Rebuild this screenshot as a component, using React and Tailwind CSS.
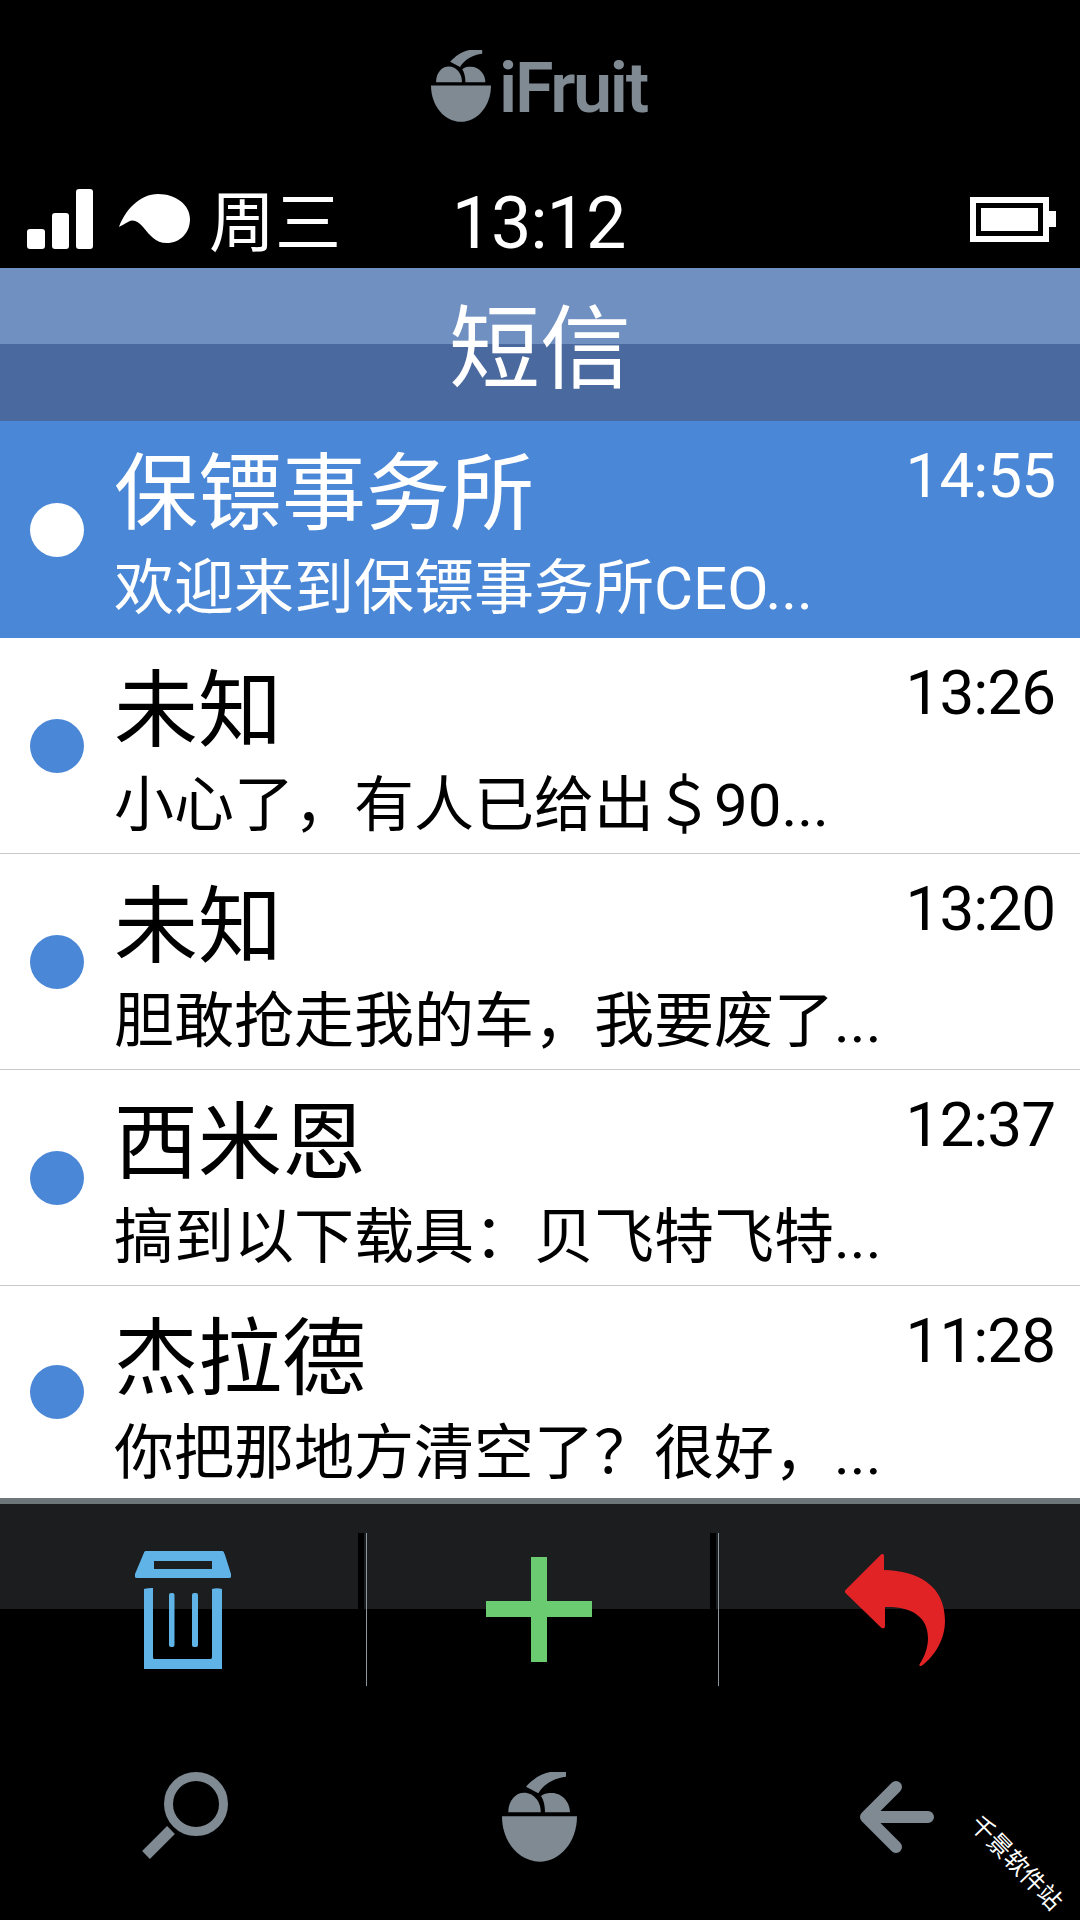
const rows = [
  { name: '保镖事务所', text: '欢迎来到保镖事务所CEO...', time: '14:55', active: true },
  { name: '未知', text: '小心了，有人已给出＄90...', time: '13:26' },
  { name: '未知', text: '胆敢抢走我的车，我要废了...', time: '13:20' },
  { name: '西米恩', text: '搞到以下载具：贝飞特飞特...', time: '12:37' },
  { name: '杰拉德', text: '你把那地方清空了？很好，...', time: '11:28' },
];

function FruitIcon({ className }) {
  return (
    <svg viewBox="0 0 75 90" className={className} fill="#7f8a93">
      <path d="M64 0 L48 0 C38 2 30 8 24 14.7 L36.3 21.3 C42 12 52 6 64 4.7Z" />
      <path d="M6.3 40.3 C6.3 28 14 20.7 22 20.7 C32 20.7 39 30 38.7 40.3Z" />
      <path d="M43 40.3 C43 32 41 27 39 24 C43 21 46 21 50 21 C60 21 68 30 68 40.3Z" />
      <path d="M0 44.3 H75 C75 70 58 89.7 37.5 89.7 C17 89.7 0 70 0 44.3Z" />
    </svg>
  );
}

function StatusBar() {
  return (
    <div className="h-[78px] pb-[20px] flex items-center text-white">
      <div className="flex-1 flex items-center pl-[27px]">
        <svg viewBox="0 0 66 60" className="w-[66px] h-[60px]" fill="#fff">
          <rect x="0" y="40" width="18" height="20" rx="3" />
          <rect x="25" y="24" width="17" height="36" rx="3" />
          <rect x="49" y="0" width="17" height="60" rx="3" />
        </svg>
        <svg viewBox="0 0 72 50" className="w-[72px] h-[50px] ml-[26px]" fill="#fff">
          <path d="M0 33 C6 16 21 0 39 0 C57 0 71 11 71 25 C71 39 61 49 48 49 C36 49 31 41 24 33 C19 27 14 25 9 28 C5 30 2 32 0 33Z" />
        </svg>
        <span className="ml-[18px] mt-[10px] text-[66px] leading-none">周三</span>
      </div>
      <span className="mt-[10px] mr-[6px] text-[72px] tracking-[-1.2px] leading-none">13:12</span>
      <div className="flex-1 flex items-center justify-end pr-[24px]">
        <div className="w-[79px] h-[45px] border-[6px] border-white p-[5px] mt-[1px]">
          <div className="w-full h-full bg-white" />
        </div>
        <div className="w-[7px] h-[16px] bg-white" />
      </div>
    </div>
  );
}

function MessageRow({ row, last }) {
  const dot = row.active ? 'bg-white' : 'bg-[#4a87d6]';
  const bg = row.active ? 'bg-[#4a87d6] text-white' : 'bg-white text-black';
  const border = row.active || last ? '' : 'border-b border-[#c8c8c8]';
  const height = row.active ? 'h-[217px]' : last ? 'h-[212px]' : 'h-[216px]';
  return (
    <div className={`flex items-center ${height} ${bg} ${border}`}>
      <div className={`w-[54px] h-[54px] rounded-full ml-[30px] ${dot}`} />
      <div className="ml-[30px] flex-1 self-start pt-[22px]">
        <div className="text-[84px] leading-[104px]">{row.name}</div>
        <div className="text-[60px] leading-[76px] mt-[4px]">{row.text}</div>
      </div>
      <div className="self-start pt-[20px] pr-[25px] text-[62px] tracking-[-1px] leading-[70px]">{row.time}</div>
    </div>
  );
}

function Toolbar() {
  return (
    <div className="h-[188px] pt-[29px] flex border-t-[6px] border-[#6d7779] bg-[linear-gradient(#1b1d1f_0,#1b1d1f_105px,#000_105px)]">
      <div className="w-[366px] h-[153px] flex items-center justify-center">
        <svg viewBox="135 1550 96 118" className="w-[96px] h-[118px]" fill="#5fb3e6">
          <path fillRule="evenodd" d="M146 1550 H222 C224 1550 224 1552 225 1554 L231 1573 C232 1576 231 1577 229 1577 H137 C135 1577 134 1576 135 1573 L143 1554 C144 1552 144 1550 146 1550Z M154 1560 V1568 H212 V1560Z" />
          <path d="M144 1588 C147 1587 150 1587 153 1587 V1656 C153 1658 154 1658 155 1658 H210 C212 1658 212 1657 212 1655 V1588 C215 1587 219 1587 222 1588 V1668 H144Z" />
          <rect x="169" y="1592" width="5.5" height="54" rx="2" />
          <rect x="192" y="1592" width="6" height="54" rx="2" />
        </svg>
      </div>
      <div className="relative w-px h-[153px] bg-[#8a96a0]">
        <div className="absolute right-[3px] top-0 w-[6px] h-[76px] bg-black" />
      </div>
      <div className="w-[351px] h-[153px] pr-[7px] flex items-center justify-center">
        <svg viewBox="0 0 106 105" className="w-[106px] h-[105px]" fill="#6bcb70">
          <rect x="45" y="0" width="16" height="105" />
          <rect x="0" y="44" width="106" height="16" />
        </svg>
      </div>
      <div className="relative w-px h-[153px] bg-[#8a96a0]">
        <div className="absolute right-[3px] top-0 w-[6px] h-[76px] bg-black" />
      </div>
      <div className="flex-1 h-[153px] pr-[9px] flex items-center justify-center">
        <svg viewBox="845 1552 101 114" className="w-[101px] h-[114px]" fill="#e12325">
          <path d="M845.5 1589 L881 1553.5 C882.5 1552.5 884 1553 884 1555 V1569 C918 1570 945 1584 945 1620 C945 1638 935 1655 922 1664.5 C920 1666 918.5 1664.5 920 1662.5 C925 1655 928 1646 928 1637 C928 1615 910 1605 885 1606 V1625 C885 1627.5 883 1628 881 1626.5 L845.5 1592 C844.5 1591 844.5 1590 845.5 1589Z" />
        </svg>
      </div>
    </div>
  );
}

function BottomNav() {
  return (
    <div className="relative h-[234px] pt-[86px] pl-[140px] flex items-start overflow-hidden">
      <svg viewBox="0 0 90 90" className="w-[90px] h-[90px]" fill="none" stroke="#7f8a93">
        <circle cx="56" cy="32" r="27.5" strokeWidth="9" />
        <path d="M31 58 L6 83" strokeWidth="11" />
      </svg>
      <FruitIcon className="w-[75px] h-[90px] ml-[272px]" />
      <svg viewBox="0 0 74 72" className="w-[74px] h-[72px] ml-[283px] mt-[9px]" fill="none" stroke="#7f8a93" strokeWidth="12" strokeLinecap="round" strokeLinejoin="round">
        <path d="M36 6 L6 36 L36 66 M6 36 H68" />
      </svg>
      <div className="absolute left-[954px] top-[164px] w-[124px] text-center rotate-[46deg] text-white text-[24px] leading-[26px]">千景软件站</div>
    </div>
  );
}

export default function App() {
  return (
    <div className="w-[1080px] h-[1920px] bg-black overflow-hidden font-['Roboto','Noto_Sans_CJK_SC',sans-serif]">
      <div className="h-[190px] pt-[50px] pl-[431px] flex items-start">
        <FruitIcon className="w-[60px] h-[72px]" />
        <span className="ml-[8px] mt-[-3px] text-[70px] leading-[82px] font-semibold tracking-[-2.3px] text-[#7f8a93]">iFruit</span>
      </div>
      <StatusBar />
      <div className="h-[153px] pt-[12px] flex items-center justify-center bg-[linear-gradient(#7090c2_0,#7090c2_76px,#4a699e_76px)] text-white text-[91px] leading-none">
        短信
      </div>
      {rows.map((row, i) => (
        <MessageRow key={i} row={row} last={i === rows.length - 1} />
      ))}
      <Toolbar />
      <BottomNav />
    </div>
  );
}
